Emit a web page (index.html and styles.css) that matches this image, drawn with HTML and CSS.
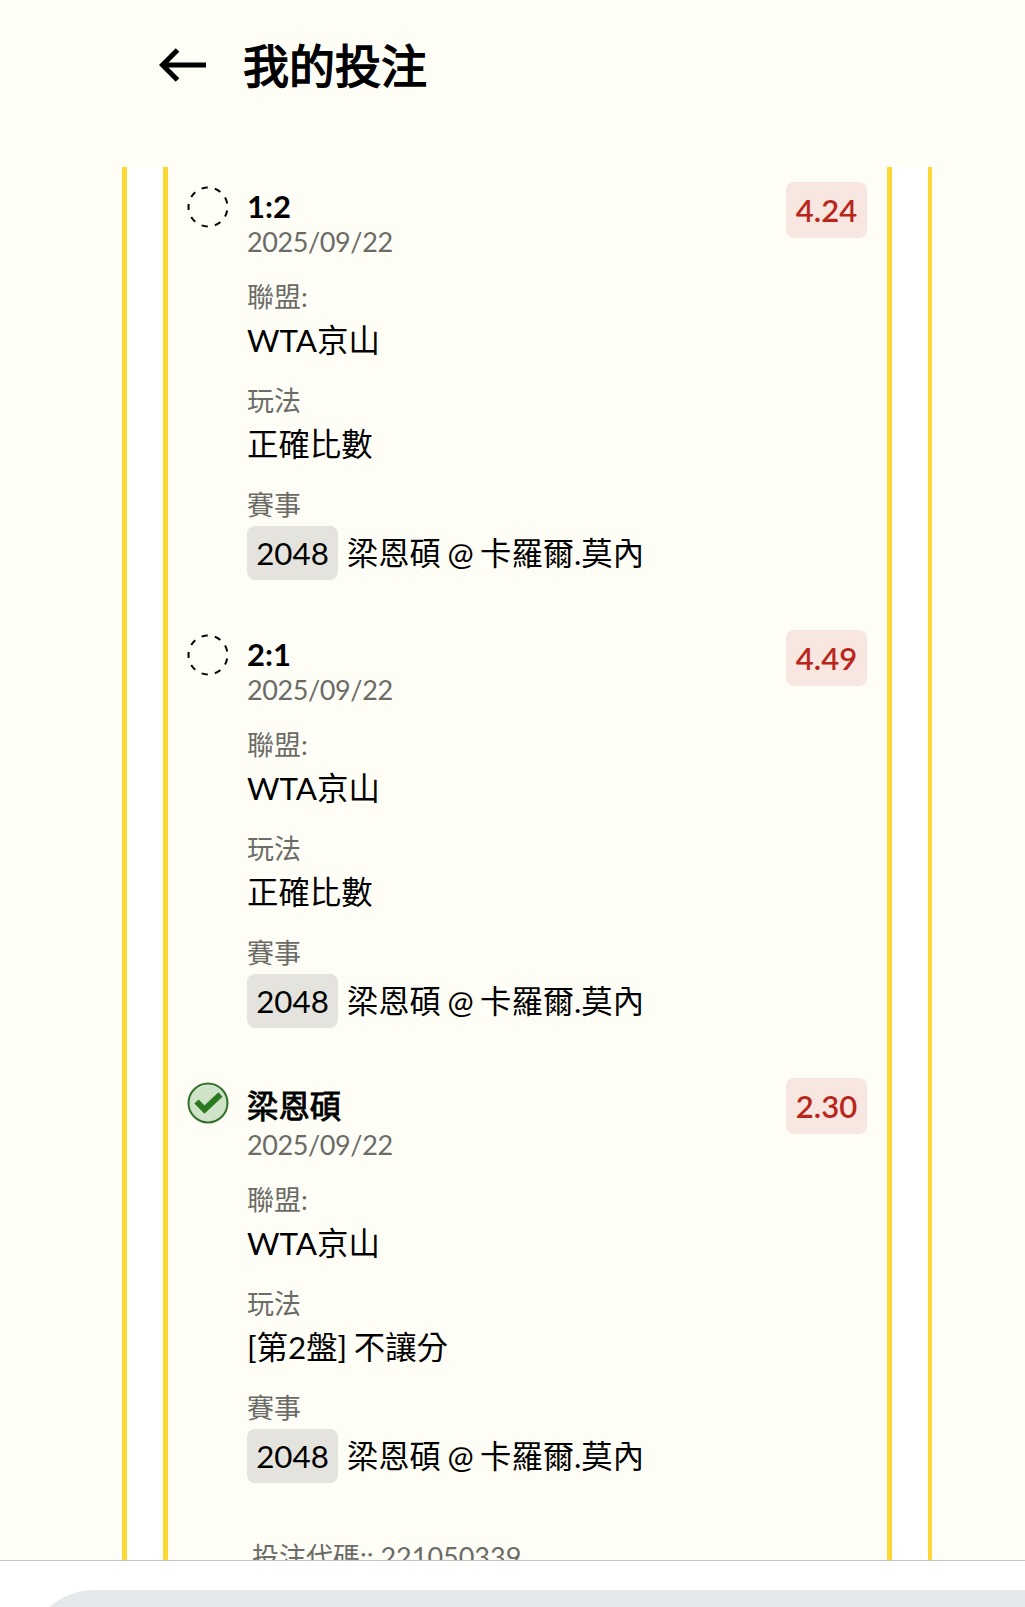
FILE: index.html
```
<!DOCTYPE html>
<html lang="zh-Hant">
<head>
    <meta charset="UTF-8">
    <meta name="viewport" content="width=device-width, initial-scale=1.0">
    <title>我的投注</title>
    <link rel="stylesheet" href="styles.css">
</head>
<body>
    <header class="header">
        <svg class="back" width="48" height="34" viewBox="0 0 48 34" fill="none" stroke="#000" stroke-width="5">
            <path d="M47 17H4M18.5 2L3.5 17l15 15"/>
        </svg>
        <h1>我的投注</h1>
    </header>

    <main class="ticket">
        <div class="bets">
            <section class="bet">
                <svg class="status" width="42" height="42" viewBox="0 0 42 42">
                    <circle class="pending" cx="21" cy="21" r="19.5" pathLength="90"/>
                </svg>
                <div class="info">
                    <h2>1:2</h2>
                    <p class="date">2025/09/22</p>
                    <p class="label">聯盟:</p>
                    <p class="value">WTA京山</p>
                    <p class="label">玩法</p>
                    <p class="value">正確比數</p>
                    <p class="label">賽事</p>
                    <p class="match"><span class="code">2048</span>梁恩碩 @ 卡羅爾.莫內</p>
                </div>
                <span class="odds">4.24</span>
            </section>

            <section class="bet">
                <svg class="status" width="42" height="42" viewBox="0 0 42 42">
                    <circle class="pending" cx="21" cy="21" r="19.5" pathLength="90"/>
                </svg>
                <div class="info">
                    <h2>2:1</h2>
                    <p class="date">2025/09/22</p>
                    <p class="label">聯盟:</p>
                    <p class="value">WTA京山</p>
                    <p class="label">玩法</p>
                    <p class="value">正確比數</p>
                    <p class="label">賽事</p>
                    <p class="match"><span class="code">2048</span>梁恩碩 @ 卡羅爾.莫內</p>
                </div>
                <span class="odds">4.49</span>
            </section>

            <section class="bet">
                <svg class="status" width="42" height="42" viewBox="0 0 42 42">
                    <circle class="won" cx="21" cy="21" r="19.5"/>
                    <path class="tick" d="M9.5 19.5l8 8L33.5 12.5"/>
                </svg>
                <div class="info">
                    <h2 class="name">梁恩碩</h2>
                    <p class="date">2025/09/22</p>
                    <p class="label">聯盟:</p>
                    <p class="value">WTA京山</p>
                    <p class="label">玩法</p>
                    <p class="value">[第2盤] 不讓分</p>
                    <p class="label">賽事</p>
                    <p class="match"><span class="code">2048</span>梁恩碩 @ 卡羅爾.莫內</p>
                </div>
                <span class="odds">2.30</span>
            </section>

            <p class="bet-code">投注代碼:: 221050339</p>
        </div>
    </main>

    <footer class="browser-bar">
        <div class="address"></div>
    </footer>
</body>
</html>
```

FILE: styles.css
```
* {
    box-sizing: border-box;
}
body {
    margin: 0;
    height: 1607px;
    overflow: hidden;
    display: flex;
    flex-direction: column;
    background: #fffef6;
    color: #000;
    font-family: Lato, "Noto Sans CJK TC", sans-serif;
    font-size: 31px;
}
h1, h2, p {
    margin: 0;
}
.header {
    height: 167px;
    flex: none;
    display: flex;
    align-items: flex-start;
    padding: 32px 0 0 159px;
}
.back {
    margin-top: 16px;
}
.header h1 {
    margin-left: 36px;
    font-size: 46px;
    line-height: 68px;
    font-weight: 400;
    -webkit-text-stroke: 1.5px #000;
}
.ticket {
    width: 810px;
    height: 1393px;
    flex: none;
    margin-left: 122px;
    padding: 0 36px;
    overflow: hidden;
    background: #fff;
    border: solid #fdd835;
    border-width: 0 4px 0 5px;
}
.bets {
    height: 1393px;
    overflow: hidden;
    padding: 15px 20px 0 19px;
    background: #fffef6;
    border: solid #fdd835;
    border-width: 0 5px;
}
.bet {
    display: flex;
    align-items: flex-start;
    margin-bottom: 50px;
}
.status {
    flex: none;
    margin: 4px 18px 0 0;
    fill: none;
}
.pending {
    stroke: #000;
    stroke-width: 2;
    stroke-dasharray: 4.6 5.4;
    stroke-dashoffset: -2.7;
}
.won {
    fill: #cfe3c9;
    stroke: #33702b;
    stroke-width: 2;
}
.tick {
    stroke: #2b7a1e;
    stroke-width: 6;
}
.info {
    flex: 1;
    padding-top: 6px;
}
.info h2 {
    font-size: 31px;
    line-height: 37px;
    font-weight: 700;
}
.info .name {
    font-size: 31.4px;
    line-height: 44px;
    font-weight: 400;
    -webkit-text-stroke: 0.9px #000;
}
.date {
    margin-bottom: 19px;
    font-size: 27px;
    line-height: 33px;
    letter-spacing: -0.4px;
    color: #6b6b67;
}
.label {
    font-size: 27px;
    line-height: 39px;
    color: #6b6b67;
}
.value {
    margin: 2px 0 18px;
    font-size: 31.4px;
    line-height: 45px;
    word-spacing: -1.5px;
}
.match {
    display: flex;
    margin-top: 2px;
    font-size: 31.3px;
    line-height: 54px;
    word-spacing: -1.5px;
}
.code {
    width: 91px;
    margin-right: 9px;
    border-radius: 8px;
    background: #e5e3de;
    text-align: center;
}
.odds {
    width: 81px;
    height: 56px;
    border-radius: 8px;
    background: #f8e6e0;
    color: #b9261c;
    font-weight: 600;
    line-height: 57px;
    text-align: center;
}
.bet-code {
    margin: 54px 0 0 65px;
    font-size: 27px;
    line-height: 39px;
    color: #6b6b67;
}
.browser-bar {
    flex: 1;
    border-top: 1px solid #c4c4c1;
    padding: 29px 0 0 25px;
    overflow: hidden;
    background: #fff;
}
/* only the top of the rounded address field is on screen */
.address {
    height: 140px;
    border-radius: 70px 0 0 70px;
    background: #e5e8eb;
}
```
